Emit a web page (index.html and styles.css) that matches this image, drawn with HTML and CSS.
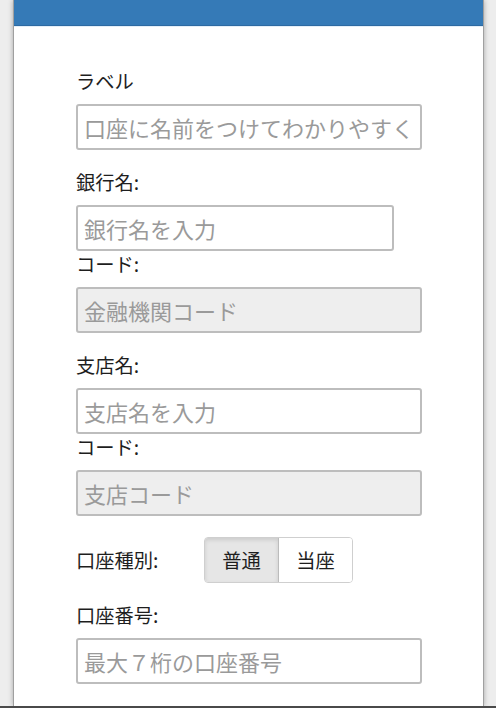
FILE: index.html
```html
<!DOCTYPE html>
<html lang="ja">
  <head>
    <meta charset="UTF-8" />
    <title>口座登録</title>
    <link rel="stylesheet" href="styles.css">
  </head>
  <body>
    <div class="card">
      <div class="card-header"></div>
      <form class="card-body">
        <div class="group">
          <label>ラベル</label>
          <input type="text" placeholder="口座に名前をつけてわかりやすくしましょう" />
        </div>

        <div class="group">
          <label>銀行名:</label>
          <input type="text" class="short" placeholder="銀行名を入力" />
          <label class="code-label">コード:</label>
          <input type="text" placeholder="金融機関コード" disabled />
        </div>

        <div class="group">
          <label>支店名:</label>
          <input type="text" placeholder="支店名を入力" />
          <label class="code-label">コード:</label>
          <input type="text" placeholder="支店コード" disabled />
        </div>

        <div class="group type-row">
          <label>口座種別:</label>
          <div class="toggle">
            <div class="toggle-btn active">普通</div>
            <div class="toggle-btn">当座</div>
          </div>
        </div>

        <div class="group last">
          <label>口座番号:</label>
          <input type="text" placeholder="最大７桁の口座番号" />
        </div>
      </form>
    </div>
    <div class="bottom-bar"></div>
  </body>
</html>
```

FILE: styles.css
```css
body {
  margin: 0;
  background: #ededed;
  font-family: "Noto Sans CJK JP", "Noto Sans", sans-serif;
  color: #1e1e1e;
  overflow: hidden;
}
.card {
  margin: 0 12px 0 13px;
  background: #fff;
  border-left: 1px solid #a0a0a0;
  border-right: 1px solid #a0a0a0;
  box-shadow: 0 0 5px rgba(0, 0, 0, 0.3);
}
.card-header {
  height: 25px;
  background: #357ab7;
  border-bottom: 1px solid #2d6aa2;
  box-shadow: 0 1px 0 #e3eef8;
}
.card-body {
  padding: 42px 0 22px 62px;
}
.group {
  margin-bottom: 19px;
}
.group.last {
  margin-bottom: 0;
}
label {
  display: block;
  font-size: 19.3px;
  line-height: 26px;
  margin-bottom: 10px;
}
input {
  display: block;
  box-sizing: border-box;
  width: 346px;
  height: 46px;
  padding: 0 6px;
  border: 2px solid #bdbdbd;
  border-radius: 3px;
  background: #fff;
  font-family: inherit;
  font-size: 22px;
  color: #333;
  outline: none;
}
input::placeholder {
  color: #9a9a9a;
}
input.short {
  width: 318px;
}
input:disabled {
  background: #eeeeee;
}
.code-label {
  margin-top: 0;
}
.type-row {
  display: flex;
  align-items: center;
  margin-top: 21px;
}
.type-row label {
  width: 128px;
  margin-bottom: 0;
}
.toggle {
  display: flex;
  border: 1px solid #cfcfcf;
  border-radius: 4px;
  overflow: hidden;
}
.toggle-btn {
  width: 73px;
  height: 44px;
  display: flex;
  align-items: center;
  justify-content: center;
  font-size: 19.3px;
  color: #1e1e1e;
  background: #fff;
}
.toggle-btn.active {
  background: #e6e6e6;
  border-right: 1px solid #bcbcbc;
  box-shadow: inset 0 2px 4px rgba(0, 0, 0, 0.12);
}
.bottom-bar {
  height: 10px;
  background: #4a4a4a;
}
```
